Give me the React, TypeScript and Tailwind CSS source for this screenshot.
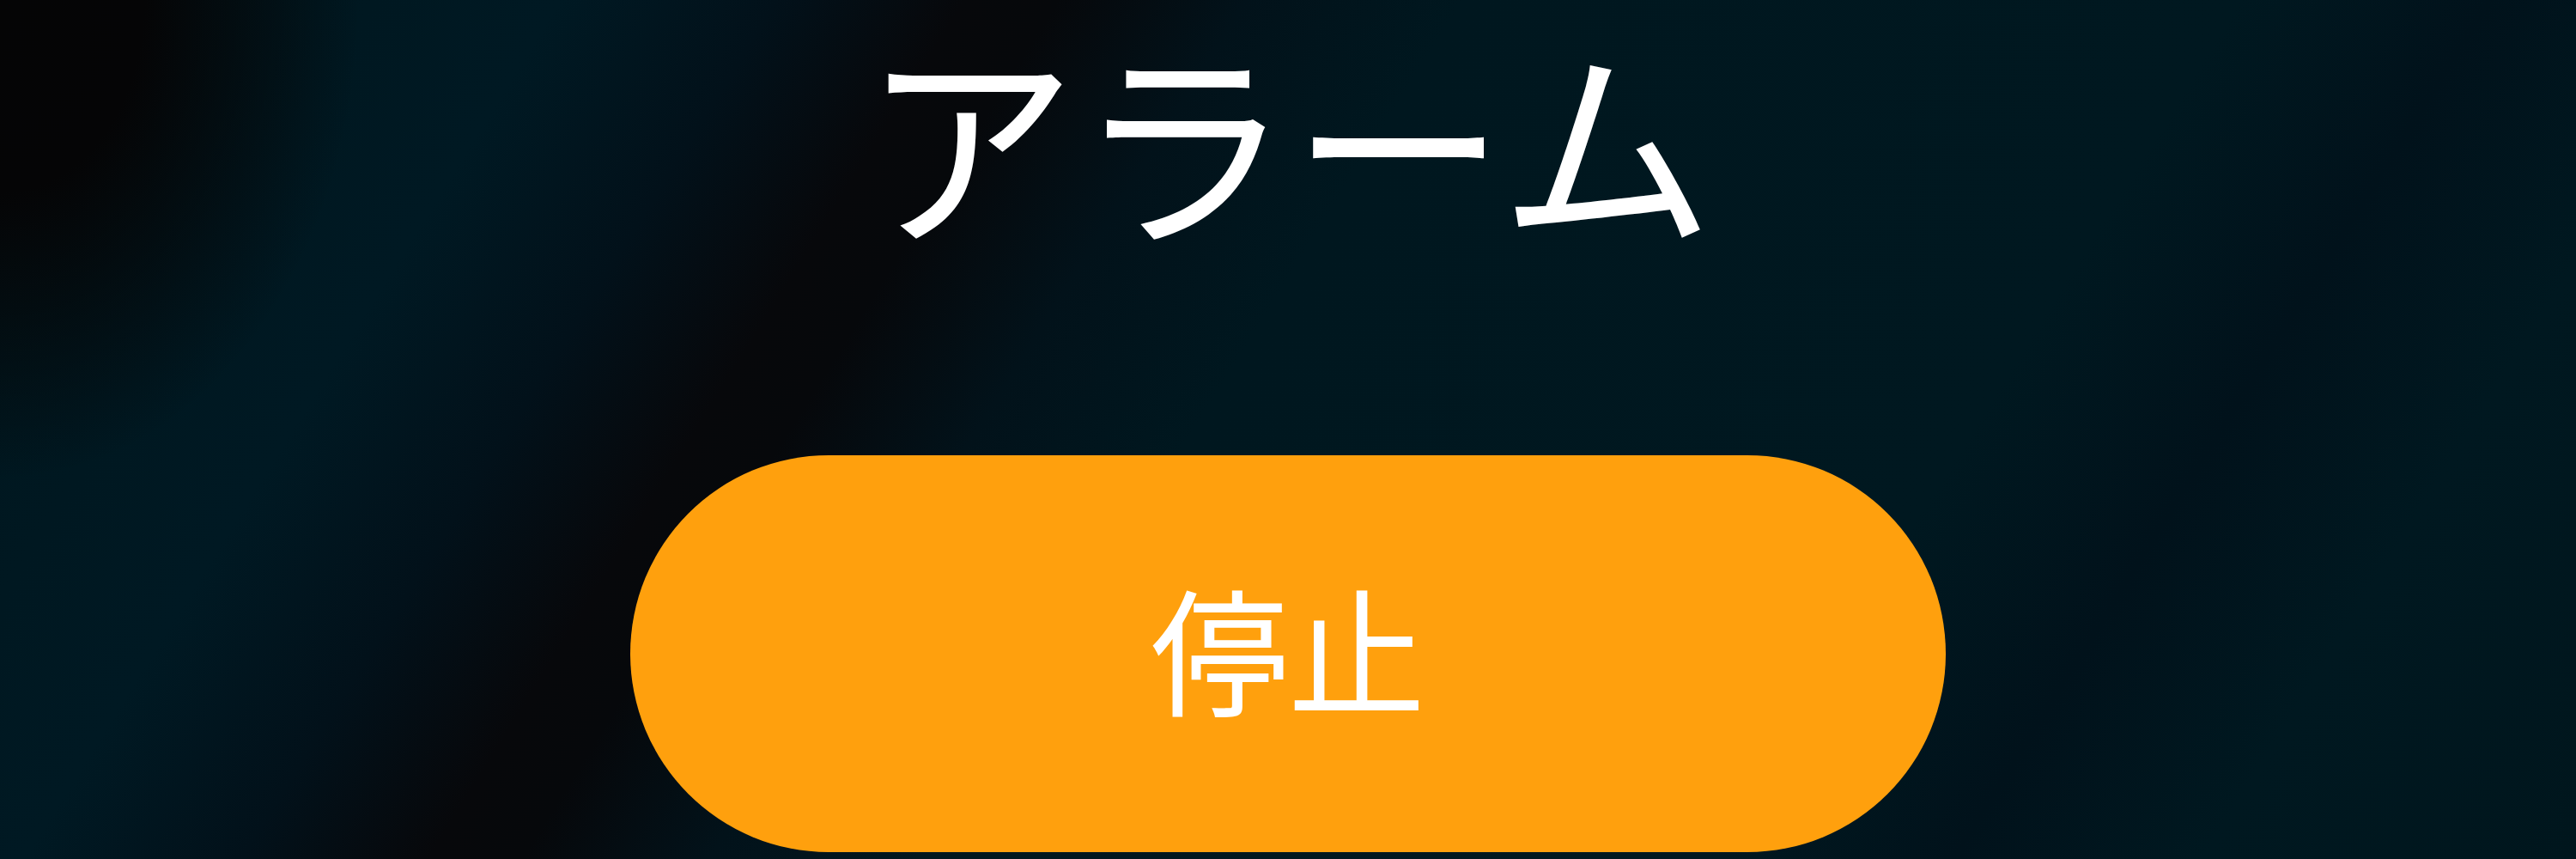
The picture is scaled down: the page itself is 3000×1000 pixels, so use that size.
export default function App() {
  return (
    <div className="w-[3000px] h-[1000px] overflow-hidden bg-[radial-gradient(ellipse_420px_560px_at_0%_0%,#050505_0%,#050506_40%,transparent_100%),linear-gradient(122deg,#00161d_0%,#001923_18%,#02111a_25%,#07080b_31%,#06080b_34%,#02121a_40%,#00171f_47%,#001820_72%,#01121b_80%,#001820_88%,#00161d_100%)] font-['Noto_Sans_CJK_JP','Noto_Sans',sans-serif]">
      <div className="flex flex-col items-center pt-[9px]">
        {/* タイトル */}
        <h1 className="text-[250px] leading-[1.2] font-normal text-white">アラーム</h1>

        {/* 停止ボタン */}
        <button className="mt-[221px] w-[1532px] h-[462px] rounded-full bg-[#ffa00d] flex items-center justify-center pb-[18px]">
          <span className="text-[160px] leading-[1.2] font-normal text-white">停止</span>
        </button>
      </div>
    </div>
  );
}
